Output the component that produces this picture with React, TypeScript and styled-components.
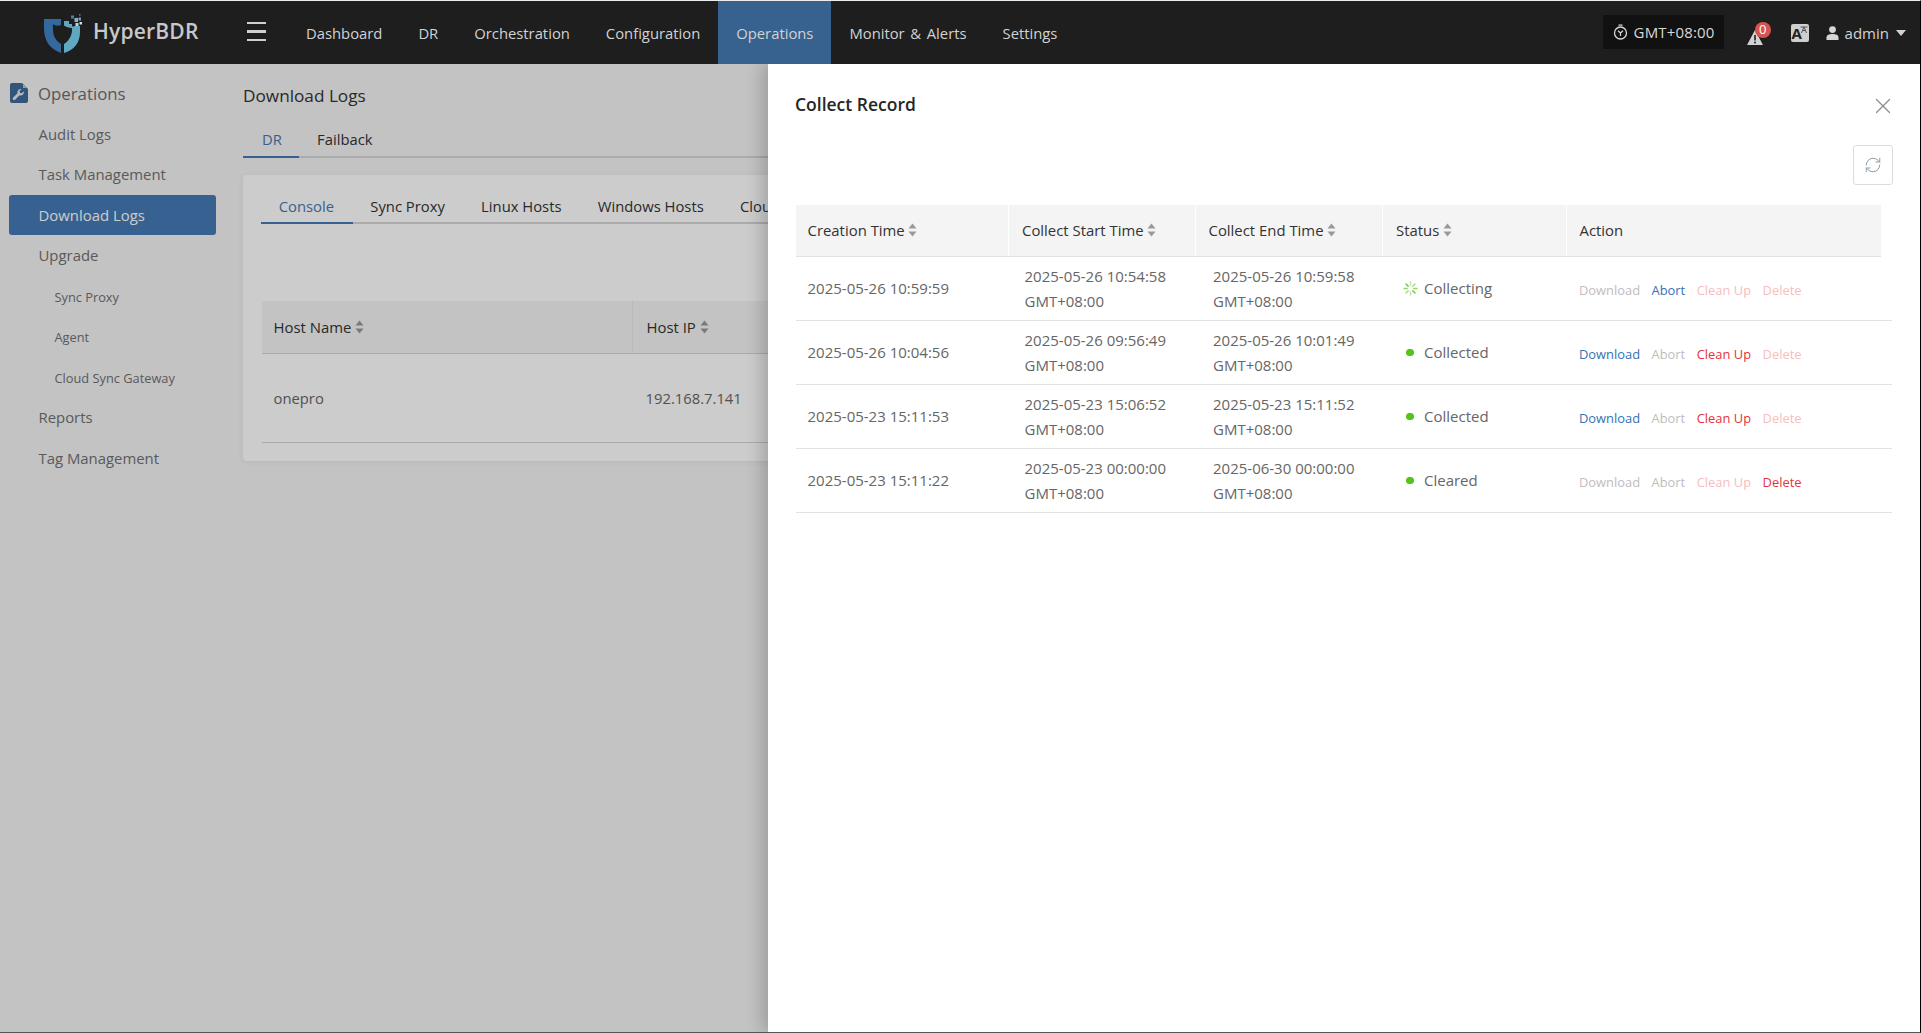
import React from "react";
import styled, { createGlobalStyle } from "styled-components";
import { RefreshCw, X } from "lucide-react";

const Global = createGlobalStyle`
  html, body { margin: 0; padding: 0; background: #fff; }
  body { font-family: "Open Sans", "Noto Sans", sans-serif; font-size: 15px; overflow: hidden; }
  * { box-sizing: border-box; }
`;

const Frame = styled.div`
  position: relative; width: 1921px; height: 1033px; overflow: hidden;
  display: flex; flex-direction: column; background: #f4f4f4;
  border-top: 1px solid #ececec; border-right: 1px solid #000; border-bottom: 1px solid #555;
`;
const Header = styled.header`
  position: relative; z-index: 3; height: 63px; flex: none; display: flex; align-items: stretch;
  background: #1e1e1e; color: #d4d4d4;
`;
const Brand = styled.div`
  width: 247px; flex: none; padding-left: 44px; display: flex; align-items: center; gap: 11px;
`;
const BrandName = styled.span`
  font-size: 21px; font-weight: 600; color: #c8c8c8; letter-spacing: .2px; margin-top: -4px;
`;
const Burger = styled.div`
  width: 19px; align-self: center; display: flex; flex-direction: column; gap: 6px; margin-top: -2px; flex: none;
  & > i { display: block; height: 2.5px; background: #d0d0d0; }
`;
const Nav = styled.nav`
  display: flex; margin-left: 22px;
`;
const NavItem = styled.a<{ $active?: boolean }>`
  display: flex; align-items: center; padding: 0 18px; font-size: 14.8px; word-spacing: 1.8px; white-space: nowrap;
  color: #d2d2d2; background: ${p => (p.$active ? "#376290" : "transparent")};
`;
const HeaderRight = styled.div`
  margin-left: auto; display: flex; align-items: center; padding-right: 14px;
`;
const TimeBox = styled.div`
  width: 121px; height: 34px; margin: -1px 23px 0 0; background: #111; color: #d8d8d8;
  display: flex; align-items: center; gap: 6px; padding-left: 10px; font-size: 15px; letter-spacing: .15px; white-space: nowrap;
`;
const Alert = styled.div`
  position: relative; width: 24px; height: 24px; margin-right: 20px; display: flex; align-items: flex-end;
`;
const Badge = styled.span`
  position: absolute; left: 8px; top: 1px; width: 16px; height: 16px; border-radius: 50%;
  background: #d9534f; color: #fff; font-size: 13px; line-height: 15px; text-align: center;
`;
const LangBox = styled.div`
  position: relative; width: 18px; height: 18px; margin-right: 17px; border-radius: 2px; background: #cfcfcf;
  color: #222; font-size: 15px; font-weight: 700; line-height: 19px; padding-left: 1px;
`;
const LangMark = styled.svg`
  position: absolute; right: 1px; top: 2px;
`;
const UserName = styled.span`
  color: #d2d2d2; font-size: 15px; margin: 0 7px 0 6px;
`;
const Caret = styled.span`
  width: 0; height: 0; border-left: 5px solid transparent; border-right: 5px solid transparent;
  border-top: 6px solid #d2d2d2;
`;

const Body = styled.div`
  flex: 1; display: flex; min-height: 0;
`;
const Sidebar = styled.aside`
  width: 243px; flex: none; padding-top: 10px;
`;
const SideTitle = styled.div`
  height: 39.75px; display: flex; align-items: center; gap: 10px; padding: 0 0 1px 10px;
  font-size: 16.8px; color: #6d6d6d;
`;
const SideItem = styled.div<{ $active?: boolean; $sub?: boolean }>`
  height: 40.5px; width: 207px; margin-left: 9px; display: flex; align-items: center;
  padding-left: ${p => (p.$sub ? "45.5px" : "29.5px")};
  padding-top: ${p => (p.$sub ? "1px" : "0")};
  padding-bottom: ${p => (p.$sub ? "0" : "1px")};
  font-size: ${p => (p.$sub ? "12.8px" : "14.9px")};
  border-radius: 3px;
  color: ${p => (p.$active ? "#fff" : "#717171")};
  background: ${p => (p.$active ? "#457ab4" : "transparent")};
`;
const Main = styled.main`
  flex: 1; min-width: 0; padding-right: 16px;
`;
const PageTitle = styled.h1`
  margin: 0; height: 64px; padding-top: 20px; font-size: 17.2px; line-height: 24px; font-weight: 400; color: #333;
`;
const Tabs = styled.div<{ $height: number }>`
  display: flex; height: ${p => p.$height}px; border-bottom: 2px solid #d6d6d6;
`;
const Tab = styled.div<{ $active?: boolean; $left: number; $right: number; $top: number; $bottom: number }>`
  height: calc(100% + 2px);
  padding: ${p => p.$top}px ${p => p.$right}px ${p => p.$bottom}px ${p => p.$left}px;
  display: flex; align-items: center; font-size: 14.8px; white-space: nowrap;
  color: ${p => (p.$active ? "#457ab4" : "#333")};
  border-bottom: 2px solid ${p => (p.$active ? "#457ab4" : "transparent")};
`;
const Card = styled.section`
  margin-top: 17px; height: 286px; padding: 11px 19px 11px 18px; background: #fff; border-radius: 4px;
  box-shadow: 0 1px 6px rgba(0,0,0,.06);
`;
const BgTable = styled.div`
  margin: 77px 0 0 1px;
`;
const BgHead = styled.div`
  display: grid; grid-template-columns: 370px 1fr; height: 53px; background: #f4f4f4; border-bottom: 1px solid #d6d6d6;
`;
const BgTh = styled.div`
  display: flex; align-items: center; gap: 4px; padding-left: 11.5px; font-size: 14.9px; color: #333;
  & + & { border-left: 1px solid #e8e8e8; padding-left: 13.5px; }
`;
const BgRow = styled.div`
  display: grid; grid-template-columns: 370px 1fr; height: 89px; border-bottom: 1px solid #d6d6d6;
`;
const BgTd = styled.div`
  display: flex; align-items: center; padding-left: 11.5px; font-size: 14.8px; color: #666;
  & + & { padding-left: 13.5px; }
`;

const Overlay = styled.div`
  position: absolute; z-index: 1; top: 63px; left: 0; right: 0; bottom: 0; background: rgba(0,0,0,.2);
`;
const Drawer = styled.div`
  position: absolute; z-index: 2; top: 63px; left: 768px; right: 0; bottom: 0; background: #fff;
  box-shadow: -6px 0 16px rgba(0,0,0,.2); padding: 28px 27px 0 27px;
`;
const DrawerTitle = styled.h2`
  margin: 0; height: 26px; font-size: 17.5px; line-height: 25px; font-weight: 600; color: #262626;
`;
const CloseBtn = styled.div`
  position: absolute; right: 24px; top: 29px; color: #8c8c8c; display: flex;
`;
const Toolbar = styled.div`
  display: flex; justify-content: flex-end; margin-top: 27px; height: 40px;
`;
const RefreshBtn = styled.div`
  width: 40px; height: 40px; border: 1px solid #dcdcdc; border-radius: 3px;
  display: flex; align-items: center; justify-content: center; color: #8b98a3;
`;
const HeadRow = styled.div`
  margin: 20px 0 0 1px; width: 1085px; height: 52px; display: grid;
  grid-template-columns: 212px 186.5px 187.5px 183.5px 1fr;
  background: #f4f4f4; border-bottom: 1px solid #e2e2e2;
`;
const Th = styled.div`
  display: flex; align-items: center; gap: 3.5px; padding: 0 0 2px 11.5px; font-size: 14.9px; color: #333; white-space: nowrap;
  & + & { padding-left: 13px; border-left: 1px solid #fff; }
`;
const Row = styled.div`
  margin-left: 1px; width: 1096px; height: 64px; display: grid;
  grid-template-columns: 214.5px 188.5px 188px 178px 1fr;
  border-bottom: 1px solid #e2e2e2;
`;
const Td = styled.div`
  display: flex; align-items: center; padding-left: 14px; font-size: 15px; line-height: 25px; color: #666;
  &:first-child { padding-left: 11.5px; }
`;
const Stacked = styled.div`
  display: flex; flex-direction: column;
`;
const StatusIcon = styled.span`
  width: 18px; flex: none; margin-right: 5px; display: flex; align-items: center; justify-content: center;
`;
const Dot = styled.i`
  width: 7.5px; height: 7.5px; border-radius: 50%; background: #52c41a;
`;
const Actions = styled.div`
  display: flex; gap: 11.5px; margin-top: 3px;
`;
const Act = styled.a<{ $kind: "blue" | "red"; $off?: boolean }>`
  font-size: 12.9px; white-space: nowrap;
  color: ${p => p.$kind === "blue" ? (p.$off ? "#bdbdbd" : "#3272b8") : (p.$off ? "#f8bcbc" : "#e5323a")};
`;
const SortWrap = styled.svg`
  flex: none;
`;

const Sort = () => (
  <SortWrap width="9" height="14" viewBox="0 0 9 14" fill="#999">
    <path d="M4.5 0.5 L8.5 5.5 H0.5 Z" />
    <path d="M0.5 8.5 H8.5 L4.5 13.5 Z" />
  </SortWrap>
);

const Logo = () => (
  <svg width="38" height="40" viewBox="0 0 38 40" style={{ marginTop: 3 }}>
    <path d="M0 5 H17 V11 C14 12 11.5 12 9 10 C8.6 18 9 25 17 30 V39 C6 35 0 27 0 14 Z" fill="#34699d" />
    <path d="M20 7 H25 V10 H28 V12 C29 13 30 13 30 12 H36 V18 C36 29 30 36 20 39 V30 C26 26 28.5 20 28 14 C25 14 22 13 20 11.5 Z" fill="#5fa8bf" />
    <rect x="27" y="1.5" width="3" height="3" fill="#4a7fb0" />
    <rect x="30.5" y="4" width="3.5" height="4" fill="#8db0cf" />
    <rect x="34.5" y="3.5" width="2.5" height="3" fill="#6f9fc4" />
    <rect x="35" y="0" width="1.6" height="1.6" fill="#3f79a8" />
    <rect x="31.5" y="9" width="3" height="3" fill="#c4d4e0" />
    <rect x="35.5" y="8" width="2.5" height="2.5" fill="#d8dde2" />
  </svg>
);

const SideIcon = () => (
  <svg width="18" height="20" viewBox="0 0 18 20">
    <path d="M2 0 H12 L18 6 V18 a2 2 0 0 1 -2 2 H2 a2 2 0 0 1 -2 -2 V2 a2 2 0 0 1 2 -2 Z" fill="#3f6b9c" />
    <path d="M13 1 L17 5 H13 Z" fill="#c3c3c3" />
    <path d="M11.5 6 a3.4 3.4 0 0 0 -4 4.2 L3 14.7 a1.5 1.5 0 0 0 2.1 2.1 L9.6 12.3 a3.4 3.4 0 0 0 4.3 -4.1 L11.9 10.2 L10 9.7 L9.5 7.9 Z" fill="#e8e8e8" />
  </svg>
);

const Clock = () => (
  <svg width="15" height="16" viewBox="0 0 15 16" fill="none" stroke="#d8d8d8">
    <circle cx="7.5" cy="9" r="6" strokeWidth="1.3" />
    <path d="M5.5 1.2 H9.5 M7.5 9 L5 6.8 M7.5 9 L10 6.8 M7.5 9 V12" strokeWidth="1.2" />
  </svg>
);

const Triangle = () => (
  <svg width="16" height="15" viewBox="0 0 16 15">
    <path d="M8 0 L16 15 H0 Z" fill="#d2d2d2" />
    <rect x="7.2" y="5" width="1.6" height="5.5" fill="#222" />
    <circle cx="8" cy="12.4" r="1" fill="#222" />
  </svg>
);

const UserIcon = () => (
  <svg width="13" height="14" viewBox="0 0 13 14" fill="#d6d6d6">
    <circle cx="6.5" cy="3.6" r="3.4" />
    <path d="M0.5 14 V11.5 C0.5 9 3 8 6.5 8 C10 8 12.5 9 12.5 11.5 V14 Z" />
  </svg>
);

const Spinner = () => (
  <svg width="15" height="15" viewBox="0 0 16 16" stroke="#73d13d" strokeWidth="1.7" strokeLinecap="round">
    {[0, 45, 90, 135, 180, 225, 270, 315].map((a, i) => (
      <line key={a} x1="8" y1="1.2" x2="8" y2="4.4" transform={`rotate(${a} 8 8)`} opacity={0.45 + (i % 4) * 0.18} />
    ))}
  </svg>
);

type Rec = { created: string; start: string; end: string; status: string; spin?: boolean; on: boolean[] };
const records: Rec[] = [
  { created: "2025-05-26 10:59:59", start: "2025-05-26 10:54:58", end: "2025-05-26 10:59:58", status: "Collecting", spin: true, on: [false, true, false, false] },
  { created: "2025-05-26 10:04:56", start: "2025-05-26 09:56:49", end: "2025-05-26 10:01:49", status: "Collected", on: [true, false, true, false] },
  { created: "2025-05-23 15:11:53", start: "2025-05-23 15:06:52", end: "2025-05-23 15:11:52", status: "Collected", on: [true, false, true, false] },
  { created: "2025-05-23 15:11:22", start: "2025-05-23 00:00:00", end: "2025-06-30 00:00:00", status: "Cleared", on: [false, false, false, true] },
];

const navItems = ["Dashboard", "DR", "Orchestration", "Configuration", "Operations", "Monitor & Alerts", "Settings"];
const sideItems: { label: string; active?: boolean; sub?: boolean }[] = [
  { label: "Audit Logs" },
  { label: "Task Management" },
  { label: "Download Logs", active: true },
  { label: "Upgrade" },
  { label: "Sync Proxy", sub: true },
  { label: "Agent", sub: true },
  { label: "Cloud Sync Gateway", sub: true },
  { label: "Reports" },
  { label: "Tag Management" },
];
const actionDefs: { label: string; kind: "blue" | "red" }[] = [
  { label: "Download", kind: "blue" },
  { label: "Abort", kind: "blue" },
  { label: "Clean Up", kind: "red" },
  { label: "Delete", kind: "red" },
];
const innerTabs = ["Console", "Sync Proxy", "Linux Hosts", "Windows Hosts", "Cloud Sync Gateway"];

export default function App() {
  return (
    <>
      <Global />
      <Frame>
        <Header>
          <Brand>
            <Logo />
            <BrandName>HyperBDR</BrandName>
          </Brand>
          <Burger><i /><i /><i /></Burger>
          <Nav>
            {navItems.map(n => <NavItem key={n} $active={n === "Operations"}>{n}</NavItem>)}
          </Nav>
          <HeaderRight>
            <TimeBox><Clock />GMT+08:00</TimeBox>
            <Alert><Triangle /><Badge>0</Badge></Alert>
            <LangBox>
              A
              <LangMark width="8" height="8" viewBox="0 0 8 8" stroke="#555" fill="none" strokeWidth="1">
                <path d="M0.5 1 H7.5 M4 1 L1.5 7 M4 1 L6.5 7 M2.5 4.5 H5.5" />
              </LangMark>
            </LangBox>
            <UserIcon />
            <UserName>admin</UserName>
            <Caret />
          </HeaderRight>
        </Header>
        <Body>
          <Sidebar>
            <SideTitle><SideIcon />Operations</SideTitle>
            {sideItems.map(s => <SideItem key={s.label} $active={s.active} $sub={s.sub}>{s.label}</SideItem>)}
          </Sidebar>
          <Main>
            <PageTitle>Download Logs</PageTitle>
            <Tabs $height={30}>
              <Tab $active $left={19} $right={17} $top={0} $bottom={6}>DR</Tab>
              <Tab $left={18.2} $right={18} $top={0} $bottom={6}>Failback</Tab>
            </Tabs>
            <Card>
              <Tabs $height={38}>
                {innerTabs.map((t, i) => (
                  <Tab key={t} $active={i === 0} $left={17.75} $right={18.5} $top={3} $bottom={0}>{t}</Tab>
                ))}
              </Tabs>
              <BgTable>
                <BgHead>
                  <BgTh>Host Name <Sort /></BgTh>
                  <BgTh>Host IP <Sort /></BgTh>
                </BgHead>
                <BgRow>
                  <BgTd>onepro</BgTd>
                  <BgTd>192.168.7.141</BgTd>
                </BgRow>
              </BgTable>
            </Card>
          </Main>
        </Body>
        <Overlay />
        <Drawer>
          <DrawerTitle>Collect Record</DrawerTitle>
          <CloseBtn><X size={26} strokeWidth={1.1} /></CloseBtn>
          <Toolbar>
            <RefreshBtn><RefreshCw size={18} strokeWidth={1.3} /></RefreshBtn>
          </Toolbar>
          <HeadRow>
            <Th>Creation Time <Sort /></Th>
            <Th>Collect Start Time <Sort /></Th>
            <Th>Collect End Time <Sort /></Th>
            <Th>Status <Sort /></Th>
            <Th>Action</Th>
          </HeadRow>
          {records.map(r => (
            <Row key={r.created}>
              <Td>{r.created}</Td>
              <Td><Stacked><span>{r.start}</span><span>GMT+08:00</span></Stacked></Td>
              <Td><Stacked><span>{r.end}</span><span>GMT+08:00</span></Stacked></Td>
              <Td>
                <StatusIcon>{r.spin ? <Spinner /> : <Dot />}</StatusIcon>
                {r.status}
              </Td>
              <Td>
                <Actions>
                  {actionDefs.map((a, i) => (
                    <Act key={a.label} $kind={a.kind} $off={!r.on[i]}>{a.label}</Act>
                  ))}
                </Actions>
              </Td>
            </Row>
          ))}
        </Drawer>
      </Frame>
    </>
  );
}
